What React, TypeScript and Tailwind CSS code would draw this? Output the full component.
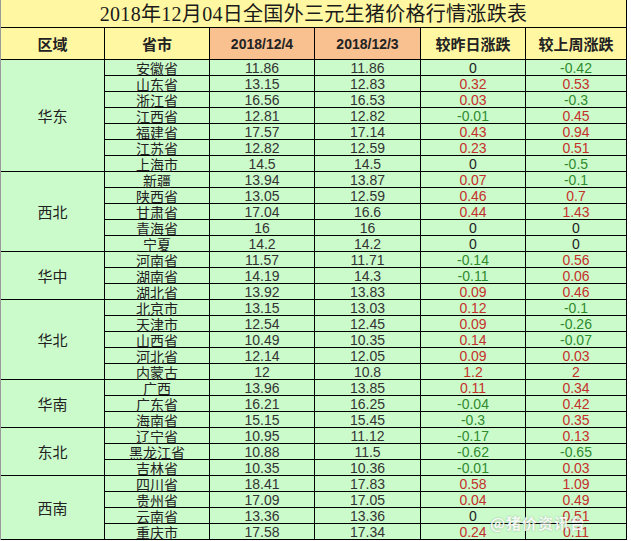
type Row = [string, string, string, string, string]

const GROUPS: Array<{ region: string; rows: Row[] }> = [
  {
    region: '华东',
    rows: [
      ['安徽省', '11.86', '11.86', '0', '-0.42'],
      ['山东省', '13.15', '12.83', '0.32', '0.53'],
      ['浙江省', '16.56', '16.53', '0.03', '-0.3'],
      ['江西省', '12.81', '12.82', '-0.01', '0.45'],
      ['福建省', '17.57', '17.14', '0.43', '0.94'],
      ['江苏省', '12.82', '12.59', '0.23', '0.51'],
      ['上海市', '14.5', '14.5', '0', '-0.5'],
    ],
  },
  {
    region: '西北',
    rows: [
      ['新疆', '13.94', '13.87', '0.07', '-0.1'],
      ['陕西省', '13.05', '12.59', '0.46', '0.7'],
      ['甘肃省', '17.04', '16.6', '0.44', '1.43'],
      ['青海省', '16', '16', '0', '0'],
      ['宁夏', '14.2', '14.2', '0', '0'],
    ],
  },
  {
    region: '华中',
    rows: [
      ['河南省', '11.57', '11.71', '-0.14', '0.56'],
      ['湖南省', '14.19', '14.3', '-0.11', '0.06'],
      ['湖北省', '13.92', '13.83', '0.09', '0.46'],
    ],
  },
  {
    region: '华北',
    rows: [
      ['北京市', '13.15', '13.03', '0.12', '-0.1'],
      ['天津市', '12.54', '12.45', '0.09', '-0.26'],
      ['山西省', '10.49', '10.35', '0.14', '-0.07'],
      ['河北省', '12.14', '12.05', '0.09', '0.03'],
      ['内蒙古', '12', '10.8', '1.2', '2'],
    ],
  },
  {
    region: '华南',
    rows: [
      ['广西', '13.96', '13.85', '0.11', '0.34'],
      ['广东省', '16.21', '16.25', '-0.04', '0.42'],
      ['海南省', '15.15', '15.45', '-0.3', '0.35'],
    ],
  },
  {
    region: '东北',
    rows: [
      ['辽宁省', '10.95', '11.12', '-0.17', '0.13'],
      ['黑龙江省', '10.88', '11.5', '-0.62', '-0.65'],
      ['吉林省', '10.35', '10.36', '-0.01', '0.03'],
    ],
  },
  {
    region: '西南',
    rows: [
      ['四川省', '18.41', '17.83', '0.58', '1.09'],
      ['贵州省', '17.09', '17.05', '0.04', '0.49'],
      ['云南省', '13.36', '13.36', '0', '0.51'],
      ['重庆市', '17.58', '17.34', '0.24', '0.11'],
    ],
  },
]

const CJK = "font-['Noto_Sans_CJK_SC',sans-serif]"
const NUM = "font-['Liberation_Sans',Arial,sans-serif]"

function changeColor(v: string) {
  const n = parseFloat(v)
  if (n > 0) return 'text-[#c4302b]'
  if (n < 0) return 'text-[#2f8a2f]'
  return 'text-[#222]'
}

const cell = 'flex items-center justify-center border-r border-b border-black bg-[#ccfbcb]'
const head = 'row-span-2 h-[32px] flex items-center justify-center border-r border-b border-black text-[#222] font-bold leading-none'

export default function App() {
  return (
    <div className="relative w-[631px] h-[541px] bg-white overflow-hidden">
      <div className="w-[627px] border-l border-[#9a9a9a]">
        {/* Title */}
        <div className="h-[28px] flex items-center justify-center bg-[#fff7a2] border-b border-r border-black">
          <span className="font-['Liberation_Serif','Noto_Sans_CJK_SC',serif] text-[20px] leading-none text-[#1a1a1a] tracking-[0.3px]">
            2018年12月04日全国外三元生猪价格行情涨跌表
          </span>
        </div>

        <div className="grid grid-cols-[104px_105px_105px_106px_105px_101px] auto-rows-[16px]">
          {/* Header */}
          <div className={`${head} bg-[#fff7a2] ${CJK} text-[15px]`}>区域</div>
          <div className={`${head} bg-[#fff7a2] ${CJK} text-[15px]`}>省市</div>
          <div className={`${head} bg-[#f9c090] ${NUM} text-[14px]`}>2018/12/4</div>
          <div className={`${head} bg-[#f9c090] ${NUM} text-[14px]`}>2018/12/3</div>
          <div className={`${head} bg-[#fff7a2] ${CJK} text-[15px]`}>较昨日涨跌</div>
          <div className={`${head} bg-[#fff7a2] ${CJK} text-[15px]`}>较上周涨跌</div>

          {GROUPS.map((g) => (
            <RegionGroup key={g.region} region={g.region} rows={g.rows} />
          ))}
        </div>
      </div>

      {/* Watermark */}
      <div className={`absolute left-[490px] top-[515px] ${CJK} text-[15px] leading-none font-bold text-white/90 [text-shadow:0_0_2px_rgba(0,0,0,0.3)] tracking-[1px]`}>
        @猪价资讯台
      </div>
    </div>
  )
}

function RegionGroup({ region, rows }: { region: string; rows: Row[] }) {
  return (
    <>
      <div className={`${cell} ${CJK} text-[15px] leading-none text-[#222]`} style={{ gridRow: `span ${rows.length}` }}>
        {region}
      </div>
      {rows.map((r) => (
        <RowCells key={r[0]} row={r} />
      ))}
    </>
  )
}

function RowCells({ row }: { row: Row }) {
  const [name, today, prev, day, week] = row
  return (
    <>
      <div className={`${cell} col-start-2 ${CJK} text-[14px] leading-[14px] text-[#222] pt-[1px]`}>{name}</div>
      <div className={`${cell} ${NUM} text-[14px] leading-[14px] text-[#333] pt-[1px]`}>{today}</div>
      <div className={`${cell} ${NUM} text-[14px] leading-[14px] text-[#333] pt-[1px]`}>{prev}</div>
      <div className={`${cell} ${NUM} text-[14px] leading-[14px] pt-[1px] ${changeColor(day)}`}>{day}</div>
      <div className={`${cell} ${NUM} text-[14px] leading-[14px] pt-[1px] ${changeColor(week)}`}>{week}</div>
    </>
  )
}
